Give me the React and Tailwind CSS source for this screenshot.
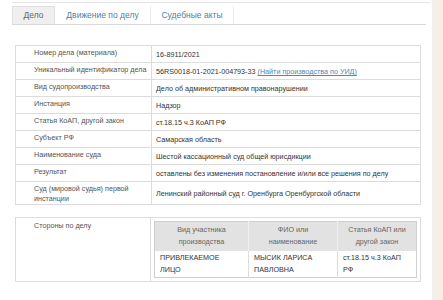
import React from "react";

const rows = [
  ["Номер дела (материала)", "16-8911/2021"],
  ["Уникальный идентификатор дела", "uid"],
  ["Вид судопроизводства", "Дело об административном правонарушении"],
  ["Инстанция", "Надзор"],
  ["Статья КоАП, другой закон", "ст.18.15 ч.3 КоАП РФ"],
  ["Субъект РФ", "Самарская область"],
  ["Наименование суда", "Шестой кассационный суд общей юрисдикции"],
  ["Результат", "оставлены без изменения постановление и/или все решения по делу"],
  ["Суд (мировой судья) первой инстанции", "Ленинский районный суд г. Оренбурга Оренбургской области"],
];

export default function App() {
  return (
    <div className="flex h-[300px] w-[443px] overflow-hidden bg-white font-['Liberation_Sans',Arial,sans-serif] text-[7.2px] text-[#333]">
      <div className="w-[432px] shrink-0 pt-[2px]">
        <div className="ml-[12px] w-[418px] border-t border-[#e6e6e6] pt-[3px]">
          <div className="flex h-[19px] w-[414px] border-b border-[#d9d9d9]">
            <div className="flex w-[43px] items-center justify-center border-x border-t border-[#e0e0e0] bg-[#efefef] text-[8.5px] text-[#666]">
              Дело
            </div>
            <div className="flex w-[96px] items-center justify-center border-r border-[#ececec] text-[8.5px] text-[#4f7f9e]">
              Движение по делу
            </div>
            <div className="flex w-[83px] items-center justify-center border-r border-[#ececec] text-[8.5px] text-[#4f7f9e]">
              Судебные акты
            </div>
          </div>
        </div>

        <table className="ml-[15px] mt-[20px] w-[406px] border-collapse border border-[#d6d6d6]">
          <tbody>
            {rows.map(([l, v], i) => (
              <tr key={i} className={i === rows.length - 1 ? "h-[22px]" : "h-[17px]"}>
                <td className="w-[136px] border border-[#dcdcdc] pl-[18px] pr-[4px] pt-[2px] align-top leading-[10px] text-[#555]">
                  {l}
                </td>
                <td className="border border-[#dcdcdc] pl-[4px] pt-[2px] align-middle leading-[10px]">
                  {v === "uid" ? (
                    <>
                      56RS0018-01-2021-004793-33{" "}
                      <span className="text-[#4a8ab5] underline">(Найти производства по УИД)</span>
                    </>
                  ) : (
                    v
                  )}
                </td>
              </tr>
            ))}
          </tbody>
        </table>

        <table className="ml-[15px] mt-[12px] w-[406px] border-collapse border border-[#d6d6d6]">
          <tbody>
            <tr>
              <td className="w-[136px] border border-[#dcdcdc] pl-[18px] pt-[3px] align-top leading-[10px] text-[#555]">
                Стороны по делу
              </td>
              <td className="border border-[#dcdcdc] p-[3px] align-top">
                <table className="w-[263px] border-collapse border border-[#cfcfcf]">
                  <thead>
                    <tr className="h-[29px] bg-[#e2e2e2]">
                      <th className="w-[94px] border-r border-[#f0f0f0] text-center align-middle text-[7.2px] font-normal leading-[12px] text-[#666]">
                        Вид участника<br />производства
                      </th>
                      <th className="w-[89px] border-r border-[#f0f0f0] text-center align-middle text-[7.2px] font-normal leading-[12px] text-[#666]">
                        ФИО или<br />наименование
                      </th>
                      <th className="text-center align-middle text-[7.2px] font-normal leading-[12px] text-[#666]">
                        Статья КоАП или<br />другой закон
                      </th>
                    </tr>
                  </thead>
                  <tbody>
                    <tr className="h-[27px]">
                      <td className="border-r border-[#dcdcdc] pl-[5px] align-middle leading-[12px]">
                        ПРИВЛЕКАЕМОЕ<br />ЛИЦО
                      </td>
                      <td className="border-r border-[#dcdcdc] pl-[5px] align-middle leading-[12px]">
                        МЫСИК ЛАРИСА<br />ПАВЛОВНА
                      </td>
                      <td className="pl-[5px] align-middle leading-[12px]">
                        ст.18.15 ч.3 КоАП<br />РФ
                      </td>
                    </tr>
                  </tbody>
                </table>
              </td>
            </tr>
          </tbody>
        </table>
      </div>
      <div className="flex-1 border-l border-[#f0f0f0] bg-[#f7eee5]" />
    </div>
  );
}
